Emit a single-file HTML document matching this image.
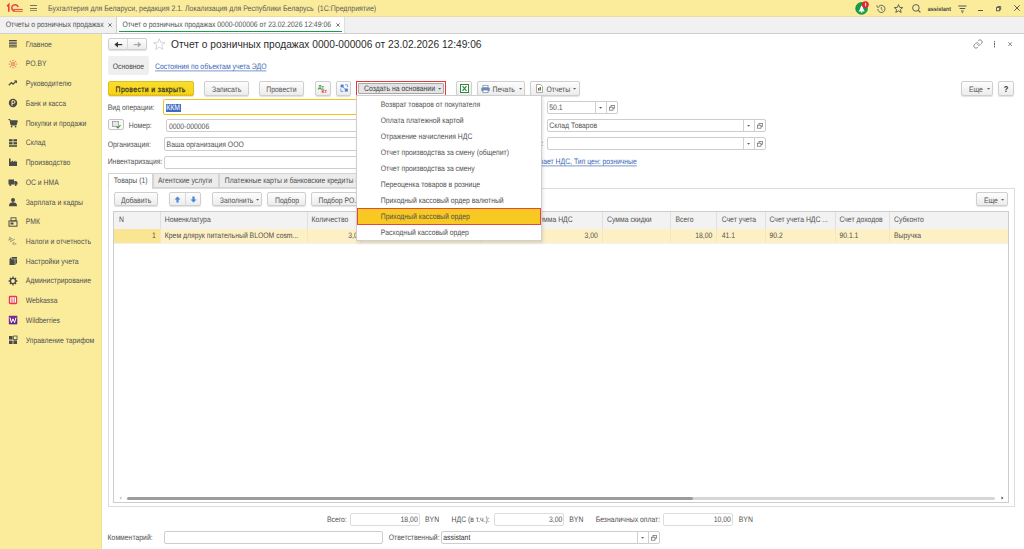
<!DOCTYPE html>
<html><head><meta charset="utf-8">
<style>
html,body{margin:0;padding:0;}
body{width:1024px;height:549px;overflow:hidden;position:relative;background:#fff;font-family:"Liberation Sans",sans-serif;font-size:6.85px;color:#505050;}
.a{position:absolute;}
.t{position:absolute;white-space:nowrap;line-height:12px;height:12px;transform:scaleY(1.15);transform-origin:0 6px;text-rendering:geometricPrecision;}
.btn{position:absolute;box-sizing:border-box;border:1px solid #cfcfcf;border-radius:2px;background:linear-gradient(#fdfdfd,#ececec);box-shadow:0 1px 1px rgba(0,0,0,.12);}
.inp{position:absolute;box-sizing:border-box;border:1px solid #cdcdcd;border-radius:2px;background:#fff;}
svg{position:absolute;overflow:visible;}
</style></head>
<body>

<div class="a" style="left:0px;top:0px;width:1024.00px;height:16.00px;background:#fbec9c;"></div>
<div class="a" style="left:0px;top:16px;width:1024.00px;height:1.00px;background:#e6dcae;"></div>
<svg style="left:0px;top:0px" width="24" height="16" viewBox="0 0 24 16"><path d="M7.1 6.4L8.8 4.6V11.7" stroke="#e8453a" stroke-width="1.6" fill="none"/><path d="M18.2 6.9A3.4 3.4 0 0 0 12.1 6.3A3.6 3.6 0 0 0 14.6 11.3" stroke="#e8453a" stroke-width="1.5" fill="none"/><path d="M13.4 9.45H22.8M13.6 11.25H22.8" stroke="#e8453a" stroke-width="0.95"/></svg>
<div class="a" style="left:30px;top:5px;width:7.40px;height:1.10px;background:#7a7458;"></div><div class="a" style="left:30px;top:7.9px;width:7.40px;height:1.10px;background:#7a7458;"></div><div class="a" style="left:30px;top:10.2px;width:7.40px;height:1.10px;background:#938c6c;"></div>
<div class="t" style="left:48px;top:4.00px;font-size:7px;color:#5a5a5a;">Бухгалтерия для Беларуси, редакция 2.1. Локализация для Республики Беларусь&nbsp;&nbsp;(1С:Предприятие)</div>
<svg style="left:855px;top:1.5px" width="14" height="14" viewBox="0 0 14 14"><circle cx="6.6" cy="6.4" r="6.3" fill="#1a9a48"/><path d="M3.6 9.6H9.8L8.6 7.6L7.2 3.8H6.2L4.8 7.6Z" fill="#fff"/><circle cx="6.7" cy="10.1" r="0.8" fill="#f3f3f3"/><circle cx="10.4" cy="2.6" r="3.4" fill="#e8222e"/><path d="M9.8 1.8L10.7 1.2V4.4" stroke="#fff" stroke-width="0.9" fill="none"/></svg>
<svg style="left:875.5px;top:3.5px" width="10" height="10" viewBox="0 0 10 10"><path d="M1.8 5A3.6 3.6 0 1 0 3 2.2" stroke="#555" stroke-width="0.9" fill="none"/><path d="M0.8 1.2L1.4 3.4L3.4 2.8" stroke="#555" stroke-width="0.8" fill="none"/><path d="M5.3 3V5.2L6.8 6.4" stroke="#555" stroke-width="0.8" fill="none"/></svg>
<svg style="left:893.5px;top:3.5px" width="10" height="10" viewBox="0 0 10 10"><path d="M4.5 0.6L5.7 3.4L8.7 3.6L6.4 5.5L7.2 8.5L4.5 6.9L1.8 8.5L2.6 5.5L0.3 3.6L3.3 3.4Z" stroke="#555" stroke-width="0.9" fill="none"/></svg>
<svg style="left:912px;top:3.5px" width="10" height="10" viewBox="0 0 10 10"><circle cx="3.9" cy="3.9" r="3.3" stroke="#555" stroke-width="0.95" fill="none"/><path d="M6.3 6.3L8.4 8.4" stroke="#555" stroke-width="1.1"/></svg>
<div class="t" style="left:927.8px;top:3.90px;font-size:5.4px;font-weight:bold;color:#4a4a4a;">assistant</div>
<svg style="left:957.8px;top:4.5px" width="9" height="9" viewBox="0 0 9 9"><path d="M0.3 1H8.5M1.6 3.5H7.2M3 6H5.8" stroke="#555" stroke-width="1"/><path d="M3.5 7.3H5.3L4.4 8.5Z" fill="#555"/></svg>
<div class="a" style="left:977.8px;top:10px;width:5.10px;height:1.00px;background:#555;"></div>
<svg style="left:996px;top:5.5px" width="6" height="6" viewBox="0 0 6 6"><rect x="0.5" y="1.6" width="3.2" height="3.2" stroke="#555" stroke-width="0.9" fill="none"/><path d="M1.6 1.4V0.5H4.7V3.6H3.8" stroke="#555" stroke-width="0.9" fill="none"/></svg>
<svg style="left:1013.5px;top:5.2px" width="6" height="6" viewBox="0 0 6 6"><path d="M0.3 0.3L5.7 5.7M5.7 0.3L0.3 5.7" stroke="#555" stroke-width="0.95"/></svg>
<div class="a" style="left:0px;top:17px;width:1024.00px;height:16.00px;background:#f1f1f1;"></div>
<div class="a" style="left:0px;top:33px;width:1024.00px;height:1.00px;background:#cfcfcf;"></div>
<div class="t" style="left:5.7px;top:20.00px;">Отчеты о розничных продажах</div>
<svg style="left:108.3px;top:22.8px" width="4" height="4" viewBox="0 0 4 4"><path d="M0.4 0.4L3.6 3.6M3.6 0.4L0.4 3.6" stroke="#555" stroke-width="0.8"/></svg>
<div class="a" style="left:115.6px;top:17px;width:227.90px;height:16.00px;background:#fff;border-left:1px solid #cdcdcd;border-right:1px solid #dedede;"></div>
<div class="a" style="left:118.5px;top:31px;width:223.50px;height:1.20px;background:#1e9a4c;"></div>
<div class="t" style="left:122.4px;top:20.00px;">Отчет о розничных продажах 0000-000006 от 23.02.2026 12:49:06</div>
<svg style="left:335.5px;top:22.8px" width="4" height="4" viewBox="0 0 4 4"><path d="M0.4 0.4L3.6 3.6M3.6 0.4L0.4 3.6" stroke="#555" stroke-width="0.8"/></svg>
<div class="a" style="left:0px;top:34px;width:101.00px;height:515.00px;background:#fbec9c;"></div>
<div class="a" style="left:100.6px;top:34px;width:1.00px;height:515.00px;background:#f0df94;"></div>
<div class="t" style="left:25.7px;top:39.70px;">Главное</div>
<div class="t" style="left:25.7px;top:59.43px;">PO.BY</div>
<div class="t" style="left:25.7px;top:79.16px;">Руководителю</div>
<div class="t" style="left:25.7px;top:98.89px;">Банк и касса</div>
<div class="t" style="left:25.7px;top:118.62px;">Покупки и продажи</div>
<div class="t" style="left:25.7px;top:138.35px;">Склад</div>
<div class="t" style="left:25.7px;top:158.08px;">Производство</div>
<div class="t" style="left:25.7px;top:177.81px;">ОС и НМА</div>
<div class="t" style="left:25.7px;top:197.54px;">Зарплата и кадры</div>
<div class="t" style="left:25.7px;top:217.27px;">РМК</div>
<div class="t" style="left:25.7px;top:237.00px;">Налоги и отчетность</div>
<div class="t" style="left:25.7px;top:256.73px;">Настройки учета</div>
<div class="t" style="left:25.7px;top:276.46px;">Администрирование</div>
<div class="t" style="left:25.7px;top:296.19px;">Webkassa</div>
<div class="t" style="left:25.7px;top:315.92px;">Wildberries</div>
<div class="t" style="left:25.7px;top:335.65px;">Управление тарифом</div>
<svg style="left:8.4px;top:39.0px" width="10" height="10" viewBox="0 0 10 10"><rect x="1" y="1.0" width="7.8" height="1" fill="#4a4a48"/><rect x="1" y="2.6" width="7.8" height="1" fill="#4a4a48"/><rect x="1" y="4.2" width="7.8" height="1" fill="#4a4a48"/><rect x="1" y="5.8" width="7.8" height="1" fill="#4a4a48"/><rect x="1" y="7.4" width="7.8" height="1" fill="#4a4a48"/></svg>
<svg style="left:8.4px;top:58.73px" width="10" height="10" viewBox="0 0 10 10"><circle cx="6.80" cy="5.00" r="0.55" fill="#e23b3b"/><circle cx="8.80" cy="5.00" r="0.55" fill="#e23b3b"/><circle cx="6.27" cy="6.27" r="0.55" fill="#e23b3b"/><circle cx="7.69" cy="7.69" r="0.55" fill="#e23b3b"/><circle cx="5.00" cy="6.80" r="0.55" fill="#e23b3b"/><circle cx="5.00" cy="8.80" r="0.55" fill="#e23b3b"/><circle cx="3.73" cy="6.27" r="0.55" fill="#e23b3b"/><circle cx="2.31" cy="7.69" r="0.55" fill="#e23b3b"/><circle cx="3.20" cy="5.00" r="0.55" fill="#e23b3b"/><circle cx="1.20" cy="5.00" r="0.55" fill="#e23b3b"/><circle cx="3.73" cy="3.73" r="0.55" fill="#e23b3b"/><circle cx="2.31" cy="2.31" r="0.55" fill="#e23b3b"/><circle cx="5.00" cy="3.20" r="0.55" fill="#e23b3b"/><circle cx="5.00" cy="1.20" r="0.55" fill="#e23b3b"/><circle cx="6.27" cy="3.73" r="0.55" fill="#e23b3b"/><circle cx="7.69" cy="2.31" r="0.55" fill="#e23b3b"/><circle cx="5" cy="5" r="0.7" fill="#e23b3b"/></svg>
<svg style="left:8.4px;top:78.46px" width="10" height="10" viewBox="0 0 10 10"><path d="M0.8 7.2L3.4 4.6L5 6.2L8.2 3" stroke="#4a4a48" stroke-width="1.3" fill="none"/><path d="M6 2.4H9V5.4Z" fill="#4a4a48"/></svg>
<svg style="left:8.4px;top:98.19px" width="10" height="10" viewBox="0 0 10 10"><circle cx="5" cy="5" r="4.2" fill="#4a4a48"/><path d="M4 7.8V2.6H5.6A1.4 1.4 0 0 1 5.6 5.4H4" stroke="#fbec9c" stroke-width="1" fill="none"/></svg>
<svg style="left:8.4px;top:117.92px" width="10" height="10" viewBox="0 0 10 10"><path d="M0.5 1.5H2L3 7H8.2L9.3 2.8H2.4" stroke="#4a4a48" stroke-width="1" fill="#4a4a48"/><circle cx="3.6" cy="8.6" r="0.9" fill="#4a4a48"/><circle cx="7.6" cy="8.6" r="0.9" fill="#4a4a48"/></svg>
<svg style="left:8.4px;top:137.65px" width="10" height="10" viewBox="0 0 10 10"><rect x="1" y="1.2" width="3.6" height="2.2" fill="#4a4a48"/><rect x="5.4" y="1.2" width="3.6" height="2.2" fill="#4a4a48"/><rect x="1" y="4.2" width="3.6" height="2.2" fill="#4a4a48"/><rect x="5.4" y="4.2" width="3.6" height="2.2" fill="#4a4a48"/><rect x="1" y="7.2" width="8" height="1.6" fill="#4a4a48"/></svg>
<svg style="left:8.4px;top:157.38px" width="10" height="10" viewBox="0 0 10 10"><path d="M1 9V1.5H2.6V5L5 3.5V5L7.5 3.5V5L9 4.2V9Z" fill="#4a4a48"/></svg>
<svg style="left:8.4px;top:177.11px" width="10" height="10" viewBox="0 0 10 10"><path d="M0.5 2.5H6V7.5H0.5ZM6.3 4H8.3L9.5 5.6V7.5H6.3Z" fill="#4a4a48"/><circle cx="2.3" cy="8" r="1" fill="#4a4a48"/><circle cx="7.7" cy="8" r="1" fill="#4a4a48"/></svg>
<svg style="left:8.4px;top:196.84px" width="10" height="10" viewBox="0 0 10 10"><circle cx="5" cy="3" r="2" fill="#4a4a48"/><path d="M1 9.2C1 6.2 3 5.3 5 5.3S9 6.2 9 9.2Z" fill="#4a4a48"/></svg>
<svg style="left:8.4px;top:216.57px" width="10" height="10" viewBox="0 0 10 10"><rect x="1" y="4" width="8" height="5.2" fill="none" stroke="#4a4a48" stroke-width="1"/><rect x="3" y="0.8" width="5" height="3" fill="none" stroke="#4a4a48" stroke-width="0.9"/><rect x="2.5" y="5.5" width="3" height="2" fill="#4a4a48"/></svg>
<svg style="left:8.4px;top:236.3px" width="10" height="10" viewBox="0 0 10 10"><text x="0.5" y="4.2" font-size="3.6" font-family="Liberation Sans" fill="#4a4a48">Дт</text><text x="4.6" y="9" font-size="3.6" font-family="Liberation Sans" fill="#4a4a48">Кт</text><path d="M2 6L7 3" stroke="#4a4a48" stroke-width="0.5"/></svg>
<svg style="left:8.4px;top:256.03px" width="10" height="10" viewBox="0 0 10 10"><path d="M1.5 3L3.5 1H9V7L7 9H1.5Z" fill="#4a4a48"/><path d="M3.5 1V3H9M7 3V9" stroke="#fbec9c" stroke-width="0.5" fill="none"/></svg>
<svg style="left:8.4px;top:275.76px" width="10" height="10" viewBox="0 0 10 10"><circle cx="5" cy="5" r="2.6" fill="none" stroke="#4a4a48" stroke-width="1.4"/><path d="M5 0.6V2.2M5 7.8V9.4M0.6 5H2.2M7.8 5H9.4M1.9 1.9L3 3M7 7L8.1 8.1M8.1 1.9L7 3M3 7L1.9 8.1" stroke="#4a4a48" stroke-width="1.3"/></svg>
<svg style="left:8.4px;top:295.49px" width="10" height="10" viewBox="0 0 10 10"><rect x="0.8" y="0.8" width="8.4" height="8.4" rx="1.4" fill="#e83a4a"/><rect x="2" y="2.3" width="6" height="5.3" fill="#fff"/><path d="M3.2 2.3V7.6M4.8 3.5V7.6M6.4 2.3V7.6" stroke="#e83a4a" stroke-width="0.7"/></svg>
<svg style="left:8.4px;top:315.22px" width="10" height="10" viewBox="0 0 10 10"><rect x="0.8" y="0.8" width="8.4" height="8.4" rx="0.6" fill="#7b2a8e"/><path d="M0.8 9.2L9.2 0.8V9.2Z" fill="#3c2a8a" opacity=".6"/><path d="M2 2.6L3.4 7.6L5 3.8L6.6 7.6L8 2.6" stroke="#fff" stroke-width="1" fill="none"/></svg>
<svg style="left:8.4px;top:334.95px" width="10" height="10" viewBox="0 0 10 10"><rect x="1" y="1" width="3.6" height="3.6" fill="#4a4a48"/><rect x="5.6" y="1" width="3.4" height="3.6" fill="none" stroke="#4a4a48" stroke-width="0.8"/><rect x="1" y="5.6" width="3.6" height="3.4" fill="#4a4a48"/><rect x="5.4" y="5.4" width="3.6" height="3.6" fill="#4a4a48"/></svg>
<div class="btn" style="left:108px;top:38.3px;width:39.00px;height:12.20px;"></div>
<div class="a" style="left:127px;top:39px;width:1.00px;height:11.00px;background:#d8d8d8;"></div>
<svg style="left:113.6px;top:41.2px" width="9" height="7" viewBox="0 0 9 7"><path d="M3.4 3.6H8.2" stroke="#333" stroke-width="1.2"/><path d="M0.4 3.6L4 0.8V6.4Z" fill="#333"/></svg>
<svg style="left:133.2px;top:41.2px" width="9" height="7" viewBox="0 0 9 7"><path d="M0.6 3.6H5.4" stroke="#a8a8a8" stroke-width="1.2"/><path d="M8.4 3.6L4.8 0.8V6.4Z" fill="#a8a8a8"/></svg>
<svg style="left:152.8px;top:38.3px" width="13" height="12.5" viewBox="0 0 13 12.5"><path d="M6.3 0.8L7.9 4.6L11.9 4.8L8.8 7.3L9.9 11.3L6.3 9.1L2.7 11.3L3.8 7.3L0.7 4.8L4.7 4.6Z" stroke="#c8c8c8" stroke-width="0.8" fill="none"/></svg>
<div class="t" style="left:171px;top:39.20px;font-size:10.2px;color:#2b2b2b;transform:none;text-rendering:auto;">Отчет о розничных продажах 0000-000006 от 23.02.2026 12:49:06</div>
<svg style="left:973.4px;top:39.2px" width="10" height="10" viewBox="0 0 24 24"><path d="M10 13a5 5 0 0 0 7.54.54l3-3a5 5 0 0 0-7.07-7.07l-1.72 1.71M14 11a5 5 0 0 0-7.54-.54l-3 3a5 5 0 0 0 7.07 7.07l1.71-1.71" stroke="#777" stroke-width="2" fill="none"/></svg>
<div class="a" style="left:994.3px;top:40.8px;width:1.00px;height:6.80px;background:repeating-linear-gradient(#666 0 1px,#bbb 1px 1.7px);"></div>
<svg style="left:1008.3px;top:42px" width="5" height="5" viewBox="0 0 5 5"><path d="M0.3 0.3L4 4M4 0.3L0.3 4" stroke="#777" stroke-width="0.9"/></svg>
<div class="a" style="left:108px;top:56px;width:41.00px;height:18.60px;background:#efefef;border-radius:2px;"></div>
<div class="t" style="left:112.8px;top:61.80px;color:#444;">Основное</div>
<div class="t" style="left:155px;top:61.80px;color:#3c64b4;text-decoration:underline;text-decoration-thickness:0.6px;text-underline-offset:0.6px;text-decoration-color:#8aa6d8;">Состояния по объектам учета ЭДО</div>
<div class="btn" style="left:108px;top:81px;width:85.80px;height:14.60px;background:linear-gradient(#f9dd30,#f7d510);border-color:#dcbf20;box-shadow:0 1px 1px rgba(120,100,0,.18);"></div>
<div class="a" style="left:109px;top:94.2px;width:84.00px;height:1.00px;border-bottom:1px dotted rgba(210,90,40,.3);box-sizing:border-box;"></div>
<div class="t" style="left:115.6px;top:84.80px;font-size:6.85px;letter-spacing:0.38px;color:#33332a;-webkit-text-stroke:0.22px #33332a;">Провести и закрыть</div>
<div class="btn" style="left:204px;top:81px;width:44.50px;height:14.60px;"></div>
<div class="t" style="left:212px;top:84.80px;">Записать</div>
<div class="btn" style="left:259px;top:81px;width:44.70px;height:14.60px;"></div>
<div class="t" style="left:266.3px;top:84.80px;">Провести</div>
<div class="btn" style="left:315px;top:81px;width:15.60px;height:14.60px;"></div>
<svg style="left:317.6px;top:83.6px" width="11" height="10" viewBox="0 0 11 10"><text x="0" y="4.6" font-size="4.9" font-weight="bold" font-family="Liberation Sans" fill="#2e9a3a">Дт</text><text x="3.4" y="8.5" font-size="4.9" font-weight="bold" font-family="Liberation Sans" fill="#e03a2a">Кт</text></svg>
<div class="btn" style="left:335.5px;top:81px;width:15.80px;height:14.60px;"></div>
<svg style="left:339.6px;top:84.4px" width="9" height="9" viewBox="0 0 9 9"><path d="M0.6 0.6H3.6V3.4H0.6Z" fill="#4a7fd0"/><path d="M4.8 4.6H7.8V7.6H4.8Z" fill="#4a7fd0"/><path d="M5 0.8H7.6V3.2M0.8 4.6V7.4H3.4M3 3.2L5 4.8" stroke="#6c9ae0" stroke-width="0.9" fill="none"/></svg>
<div class="a" style="left:356px;top:81px;width:90.00px;height:15.00px;border:1.3px solid #e23a3a;box-sizing:border-box;"></div>
<div class="a" style="left:358px;top:82.6px;width:86.20px;height:11.80px;background:#e4e4e4;border:1px solid #a8a8a8;box-sizing:border-box;border-radius:1px;"></div>
<div class="t" style="left:364px;top:84.30px;color:#3e3e3e;">Создать на основании</div>
<svg style="left:438.2px;top:87.8px" width="4" height="2.5"><path d="M0 0H3.2L1.6 1.8Z" fill="#666"/></svg>
<div class="btn" style="left:456.2px;top:81px;width:15.80px;height:14.60px;"></div>
<svg style="left:459.5px;top:84px" width="9" height="9" viewBox="0 0 9 9"><rect x="0.5" y="0.5" width="8" height="8" fill="#fff" stroke="#2e8b3e" stroke-width="1"/><path d="M2.5 2.2L6.5 6.8M6.5 2.2L2.5 6.8" stroke="#2e8b3e" stroke-width="1.2"/></svg>
<div class="btn" style="left:477px;top:81px;width:48.30px;height:14.60px;"></div>
<svg style="left:481px;top:84.5px" width="9" height="8" viewBox="0 0 9 8"><rect x="2" y="0.3" width="5" height="2.5" fill="#fff" stroke="#7088b0" stroke-width="0.7"/><rect x="0.3" y="2.6" width="8.4" height="3.6" rx="0.8" fill="#7088b0"/><rect x="2" y="5" width="5" height="2.7" fill="#fff" stroke="#7088b0" stroke-width="0.7"/></svg>
<div class="t" style="left:492.5px;top:84.80px;">Печать</div>
<svg style="left:518.6999999999999px;top:87.8px" width="4" height="2.5"><path d="M0 0H3.2L1.6 1.8Z" fill="#666"/></svg>
<div class="btn" style="left:530px;top:81px;width:49.50px;height:14.60px;"></div>
<svg style="left:535.5px;top:84px" width="7" height="9" viewBox="0 0 7 9"><path d="M0.5 0.5H4.5L6.5 2.5V8.5H0.5Z" fill="#fff" stroke="#8a8a8a" stroke-width="0.7"/><rect x="2" y="4" width="1.4" height="2.5" fill="#d03a3a"/><rect x="3.6" y="3" width="1.4" height="3.5" fill="#3a9a4a"/></svg>
<div class="t" style="left:546.5px;top:84.80px;">Отчеты</div>
<svg style="left:572.9px;top:87.8px" width="4" height="2.5"><path d="M0 0H3.2L1.6 1.8Z" fill="#666"/></svg>
<div class="btn" style="left:961.4px;top:81px;width:32.10px;height:14.60px;"></div>
<div class="t" style="left:969px;top:84.80px;">Еще</div>
<svg style="left:986.6999999999999px;top:87.8px" width="4" height="2.5"><path d="M0 0H3.2L1.6 1.8Z" fill="#666"/></svg>
<div class="btn" style="left:998.3px;top:81px;width:15.90px;height:14.60px;"></div>
<div class="t" style="left:1003.8px;top:84.20px;font-weight:bold;font-size:7.5px;color:#333;">?</div>
<div class="t" style="left:107.7px;top:103.00px;">Вид операции:</div>
<div class="a" style="left:162.9px;top:99px;width:337.10px;height:16.40px;border:1.3px solid #f3c41a;box-sizing:border-box;border-radius:2px;background:#fff;"></div>
<div class="a" style="left:166px;top:103.7px;width:15.00px;height:7.90px;background:#3e6cc2;"></div>
<div class="t" style="left:166.3px;top:103.40px;color:#fff;">ККМ</div>
<div class="btn" style="left:107.7px;top:118.7px;width:16.00px;height:11.10px;background:#fafafa;box-shadow:none;border-color:#c4c4c4;"></div>
<svg style="left:111.5px;top:120.5px" width="9" height="8" viewBox="0 0 9 8"><rect x="0.5" y="0.5" width="6" height="5" fill="#e8e8e8" stroke="#8a8a8a" stroke-width="0.7"/><path d="M4.5 5.5L6 7L8.5 4" stroke="#2a9a3a" stroke-width="1.1" fill="none"/></svg>
<div class="t" style="left:128.8px;top:121.40px;">Номер:</div>
<div class="inp" style="left:165.8px;top:119.2px;width:334.20px;height:13.10px;"></div>
<div class="t" style="left:168.9px;top:121.60px;">0000-000006</div>
<div class="t" style="left:107.7px;top:139.60px;">Организация:</div>
<div class="inp" style="left:164.1px;top:137.3px;width:335.90px;height:13.30px;"></div>
<div class="t" style="left:166.6px;top:139.60px;">Ваша организация ООО</div>
<div class="t" style="left:107.7px;top:157.20px;">Инвентаризация:</div>
<div class="inp" style="left:164.1px;top:155.5px;width:335.90px;height:13.30px;"></div>
<div class="inp" style="left:547.2px;top:101.3px;width:70.60px;height:12.70px;"></div>
<div class="a" style="left:595.2px;top:101.5px;width:1.00px;height:12.30px;background:#d0d0d0;"></div><div class="a" style="left:606.1px;top:101.5px;width:1.00px;height:12.30px;background:#d0d0d0;"></div>
<div class="t" style="left:549.3px;top:103.00px;">50.1</div>
<svg style="left:599.1px;top:106.9px" width="4" height="2.5"><path d="M0 0H3.2L1.6 1.8Z" fill="#555"/></svg>
<svg style="left:609px;top:104.5px" width="6" height="6" viewBox="0 0 6 6"><rect x="2" y="0.5" width="3.5" height="3" fill="#fff" stroke="#666" stroke-width="0.7"/><rect x="0.5" y="2.2" width="3.5" height="3" fill="#fff" stroke="#666" stroke-width="0.7"/></svg>
<div class="inp" style="left:547.2px;top:119.1px;width:218.60px;height:13.20px;"></div>
<div class="a" style="left:743.3px;top:119.3px;width:1.00px;height:12.80px;background:#d0d0d0;"></div><div class="a" style="left:753.8px;top:119.3px;width:1.00px;height:12.80px;background:#d0d0d0;"></div>
<div class="t" style="left:549.3px;top:120.70px;">Склад Товаров</div>
<svg style="left:747.0px;top:124.9px" width="4" height="2.5"><path d="M0 0H3.2L1.6 1.8Z" fill="#666"/></svg>
<svg style="left:757px;top:122.7px" width="6" height="6" viewBox="0 0 6 6"><rect x="2" y="0.5" width="3.5" height="3" fill="#fff" stroke="#666" stroke-width="0.7"/><rect x="0.5" y="2.2" width="3.5" height="3" fill="#fff" stroke="#666" stroke-width="0.7"/></svg>
<div class="inp" style="left:547.2px;top:136.9px;width:218.60px;height:13.50px;"></div>
<div class="a" style="left:743.3px;top:137.1px;width:1.00px;height:13.10px;background:#d0d0d0;"></div><div class="a" style="left:753.8px;top:137.1px;width:1.00px;height:13.10px;background:#d0d0d0;"></div>
<svg style="left:747.0px;top:142.85px" width="4" height="2.5"><path d="M0 0H3.2L1.6 1.8Z" fill="#666"/></svg>
<svg style="left:757px;top:140.7px" width="6" height="6" viewBox="0 0 6 6"><rect x="2" y="0.5" width="3.5" height="3" fill="#fff" stroke="#666" stroke-width="0.7"/><rect x="0.5" y="2.2" width="3.5" height="3" fill="#fff" stroke="#666" stroke-width="0.7"/></svg>
<div class="t" style="left:541.5px;top:139.20px;">:</div>
<div class="t" style="right:387.20px;top:156.60px;color:#3c64b4;text-decoration:underline;text-decoration-thickness:0.6px;text-underline-offset:0.6px;text-decoration-color:#8aa6d8;">Цена включает НДС, Тип цен: розничные</div>
<div class="a" style="left:107.6px;top:187.6px;width:907.00px;height:319.80px;border:1px solid #dcdcdc;box-sizing:border-box;"></div>
<div class="a" style="left:152.6px;top:173px;width:66.20px;height:15.40px;background:#ececec;border:1px solid #d4d4d4;box-sizing:border-box;"></div>
<div class="a" style="left:218.8px;top:173px;width:181.20px;height:15.40px;background:#ececec;border:1px solid #d4d4d4;box-sizing:border-box;"></div>
<div class="a" style="left:108.1px;top:173px;width:44.70px;height:16.00px;background:#fff;border:1px solid #d4d4d4;border-bottom:none;box-sizing:border-box;"></div>
<div class="t" style="left:113.7px;top:176.00px;">Товары (1)</div>
<div class="t" style="left:158px;top:176.00px;">Агентские услуги</div>
<div class="t" style="left:224.8px;top:176.00px;">Платежные карты и банковские кредиты (1)</div>
<div class="btn" style="left:113.8px;top:192.2px;width:44.70px;height:14.00px;"></div>
<div class="t" style="left:121px;top:195.70px;">Добавить</div>
<div class="btn" style="left:169px;top:192.2px;width:31.50px;height:14.00px;"></div>
<div class="a" style="left:184.6px;top:193px;width:1.00px;height:12.50px;background:#d8d8d8;"></div>
<svg style="left:173.5px;top:196px" width="7" height="7" viewBox="0 0 7 7"><path d="M3.5 0.5L6.5 3.5H4.6V6.5H2.4V3.5H0.5Z" fill="#4a86d8"/></svg>
<svg style="left:189.5px;top:196px" width="7" height="7" viewBox="0 0 7 7"><path d="M3.5 6.5L6.5 3.5H4.6V0.5H2.4V3.5H0.5Z" fill="#4a86d8"/></svg>
<div class="btn" style="left:212px;top:192.2px;width:50.00px;height:14.00px;"></div>
<div class="t" style="left:219.8px;top:195.70px;">Заполнить</div>
<svg style="left:255.6px;top:199.39999999999998px" width="4" height="2.5"><path d="M0 0H3.2L1.6 1.8Z" fill="#666"/></svg>
<div class="btn" style="left:267px;top:192.2px;width:39.00px;height:14.00px;"></div>
<div class="t" style="left:275px;top:195.70px;">Подбор</div>
<div class="btn" style="left:311px;top:192.2px;width:69.00px;height:14.00px;"></div>
<div class="t" style="left:318.5px;top:195.70px;">Подбор РО...</div>
<div class="btn" style="left:976px;top:192.2px;width:32.00px;height:14.00px;"></div>
<div class="t" style="left:984px;top:195.70px;">Еще</div>
<svg style="left:1001.4px;top:199.39999999999998px" width="4" height="2.5"><path d="M0 0H3.2L1.6 1.8Z" fill="#666"/></svg>
<div class="a" style="left:113px;top:211px;width:896.00px;height:291.60px;border:1px solid #cdcdcd;box-sizing:border-box;"></div>
<div class="a" style="left:114px;top:212px;width:894.00px;height:16.60px;background:#f2f2f2;"></div>
<div class="a" style="left:114px;top:228.6px;width:894.00px;height:14.30px;background:#fdf0c4;"></div>
<div class="a" style="left:114px;top:228.6px;width:46.00px;height:14.30px;background:#fae593;"></div>
<div class="a" style="left:160px;top:212.3px;width:1.00px;height:16.30px;background:#e0e0e0;"></div>
<div class="a" style="left:160px;top:228.6px;width:1.00px;height:14.30px;background:#f3e8c4;"></div>
<div class="a" style="left:307px;top:212.3px;width:1.00px;height:16.30px;background:#e0e0e0;"></div>
<div class="a" style="left:307px;top:228.6px;width:1.00px;height:14.30px;background:#f3e8c4;"></div>
<div class="a" style="left:360px;top:212.3px;width:1.00px;height:16.30px;background:#e0e0e0;"></div>
<div class="a" style="left:360px;top:228.6px;width:1.00px;height:14.30px;background:#f3e8c4;"></div>
<div class="a" style="left:480px;top:212.3px;width:1.00px;height:16.30px;background:#e0e0e0;"></div>
<div class="a" style="left:480px;top:228.6px;width:1.00px;height:14.30px;background:#f3e8c4;"></div>
<div class="a" style="left:602px;top:212.3px;width:1.00px;height:16.30px;background:#e0e0e0;"></div>
<div class="a" style="left:602px;top:228.6px;width:1.00px;height:14.30px;background:#f3e8c4;"></div>
<div class="a" style="left:670px;top:212.3px;width:1.00px;height:16.30px;background:#e0e0e0;"></div>
<div class="a" style="left:670px;top:228.6px;width:1.00px;height:14.30px;background:#f3e8c4;"></div>
<div class="a" style="left:716px;top:212.3px;width:1.00px;height:16.30px;background:#e0e0e0;"></div>
<div class="a" style="left:716px;top:228.6px;width:1.00px;height:14.30px;background:#f3e8c4;"></div>
<div class="a" style="left:764.5px;top:212.3px;width:1.00px;height:16.30px;background:#e0e0e0;"></div>
<div class="a" style="left:764.5px;top:228.6px;width:1.00px;height:14.30px;background:#f3e8c4;"></div>
<div class="a" style="left:835px;top:212.3px;width:1.00px;height:16.30px;background:#e0e0e0;"></div>
<div class="a" style="left:835px;top:228.6px;width:1.00px;height:14.30px;background:#f3e8c4;"></div>
<div class="a" style="left:889px;top:212.3px;width:1.00px;height:16.30px;background:#e0e0e0;"></div>
<div class="a" style="left:889px;top:228.6px;width:1.00px;height:14.30px;background:#f3e8c4;"></div>
<div class="a" style="left:114px;top:242.9px;width:894.00px;height:1.00px;background:#f1f1f1;"></div>
<div class="t" style="right:451.30px;top:215.20px;">Сумма НДС</div>
<div class="t" style="left:119px;top:215.20px;">N</div>
<div class="t" style="left:164.8px;top:215.20px;">Номенклатура</div>
<div class="t" style="left:311.5px;top:215.20px;">Количество</div>
<div class="t" style="left:364px;top:215.20px;">Цена</div>
<div class="t" style="left:484px;top:215.20px;">Сумма</div>
<div class="t" style="left:607px;top:215.20px;">Сумма скидки</div>
<div class="t" style="left:675.5px;top:215.20px;">Всего</div>
<div class="t" style="left:721.7px;top:215.20px;">Счет учета</div>
<div class="t" style="left:769.5px;top:215.20px;">Счет учета НДС ...</div>
<div class="t" style="left:839.4px;top:215.20px;">Счет доходов</div>
<div class="t" style="left:894px;top:215.20px;">Субконто</div>
<div class="t" style="right:868.10px;top:231.10px;">1</div>
<div class="t" style="left:164.8px;top:231.10px;">Крем длярук питательный BLOOM cosm...</div>
<div class="t" style="left:348.2px;top:231.10px;">3,000</div>
<div class="t" style="right:426.20px;top:231.10px;">3,00</div>
<div class="t" style="right:311.70px;top:231.10px;">18,00</div>
<div class="t" style="left:721.7px;top:231.10px;">41.1</div>
<div class="t" style="left:769.5px;top:231.10px;">90.2</div>
<div class="t" style="left:839.4px;top:231.10px;">90.1.1</div>
<div class="t" style="left:894px;top:231.10px;">Выручка</div>
<svg style="left:118.5px;top:496px" width="3" height="4" viewBox="0 0 3 4"><path d="M2.5 0.5V3.5L0.5 2Z" fill="#bbb"/></svg>
<div class="a" style="left:690px;top:496.5px;width:305.40px;height:3.40px;background:#d6d6d6;border-radius:2px;"></div>
<div class="a" style="left:126.7px;top:496.5px;width:566.70px;height:3.40px;background:#9c9c9c;border-radius:2px;"></div>
<svg style="left:1000.5px;top:496px" width="3" height="4" viewBox="0 0 3 4"><path d="M0.5 0.5V3.5L2.5 2Z" fill="#444"/></svg>
<div class="t" style="left:326.9px;top:515.00px;">Всего:</div>
<div class="inp" style="left:350.3px;top:512.5px;width:69.50px;height:13.30px;border-color:#dcdcdc;"></div>
<div class="t" style="right:606.30px;top:515.00px;">18,00</div>
<div class="t" style="left:425px;top:515.00px;">BYN</div>
<div class="t" style="left:451.6px;top:515.00px;">НДС (в т.ч.):</div>
<div class="inp" style="left:494.4px;top:512.5px;width:69.50px;height:13.30px;border-color:#dcdcdc;"></div>
<div class="t" style="right:461.70px;top:515.00px;">3,00</div>
<div class="t" style="left:569.3px;top:515.00px;">BYN</div>
<div class="t" style="left:595.7px;top:515.00px;">Безналичных оплат:</div>
<div class="inp" style="left:663.4px;top:512.5px;width:69.70px;height:13.30px;border-color:#dcdcdc;"></div>
<div class="t" style="right:293.20px;top:515.00px;">10,00</div>
<div class="t" style="left:738.8px;top:515.00px;">BYN</div>
<div class="t" style="left:107.6px;top:533.30px;">Комментарий:</div>
<div class="inp" style="left:164.2px;top:531.2px;width:218.80px;height:12.40px;"></div>
<div class="t" style="left:388.8px;top:533.30px;">Ответственный:</div>
<div class="inp" style="left:441.3px;top:531.2px;width:218.40px;height:12.60px;"></div>
<div class="a" style="left:637px;top:531.4px;width:1.00px;height:12.20px;background:#d0d0d0;"></div><div class="a" style="left:648.3px;top:531.4px;width:1.00px;height:12.20px;background:#d0d0d0;"></div>
<div class="t" style="left:443.3px;top:533.30px;color:#333;">assistant</div>
<svg style="left:641.0px;top:536.7px" width="4" height="2.5"><path d="M0 0H3.2L1.6 1.8Z" fill="#666"/></svg>
<svg style="left:651px;top:534.5px" width="6" height="6" viewBox="0 0 6 6"><rect x="2" y="0.5" width="3.5" height="3" fill="#fff" stroke="#666" stroke-width="0.7"/><rect x="0.5" y="2.2" width="3.5" height="3" fill="#fff" stroke="#666" stroke-width="0.7"/></svg>
<div class="a" style="left:356px;top:95.3px;width:185.80px;height:145.50px;background:#fff;border:1px solid #cfcfcf;box-sizing:border-box;box-shadow:1px 2px 3px rgba(0,0,0,.12);"></div>
<div class="a" style="left:357.2px;top:208.4px;width:183.90px;height:16.50px;background:#f8c923;border:1.2px solid #e24a35;box-sizing:border-box;"></div>
<div class="t" style="left:380.8px;top:99.90px;">Возврат товаров от покупателя</div>
<div class="t" style="left:380.8px;top:115.90px;">Оплата платежной картой</div>
<div class="t" style="left:380.8px;top:131.90px;">Отражение начисления НДС</div>
<div class="t" style="left:380.8px;top:147.90px;">Отчет производства за смену (общепит)</div>
<div class="t" style="left:380.8px;top:163.90px;">Отчет производства за смену</div>
<div class="t" style="left:380.8px;top:179.90px;">Переоценка товаров в рознице</div>
<div class="t" style="left:380.8px;top:195.90px;">Приходный кассовый ордер валютный</div>
<div class="t" style="left:380.8px;top:211.90px;">Приходный кассовый ордер</div>
<div class="t" style="left:380.8px;top:227.90px;">Расходный кассовый ордер</div>
</body></html>
